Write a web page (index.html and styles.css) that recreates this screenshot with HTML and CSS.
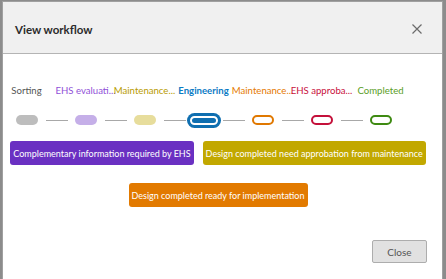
FILE: index.html
```html
<!DOCTYPE html>
<html>
<head>
<meta charset="utf-8">
<link rel="stylesheet" href="styles.css">
</head>
<body>
<div class="dialog">
  <div class="header">
    <span class="title">View workflow</span>
    <span class="close-x">
      <svg width="10" height="10" viewBox="0 0 10 10"><path d="M0.5 0.5L9.5 9.5M9.5 0.5L0.5 9.5" stroke="#6b6b6b" stroke-width="1.2" fill="none"/></svg>
    </span>
  </div>
  <div class="body">
    <div class="steps">
      <div class="step">
        <div class="label c-gray">Sorting</div>
        <div class="track"><span class="pill p-gray"></span></div>
      </div>
      <div class="step">
        <div class="label c-purple">EHS evaluati...</div>
        <div class="track"><span class="pill p-purple"></span></div>
      </div>
      <div class="step">
        <div class="label c-gold">Maintenance...</div>
        <div class="track"><span class="pill p-gold"></span></div>
      </div>
      <div class="step">
        <div class="label c-blue active">Engineering</div>
        <div class="track"><span class="pill p-active"><span class="inner"></span></span></div>
      </div>
      <div class="step">
        <div class="label c-orange">Maintenance...</div>
        <div class="track"><span class="pill o-orange"></span></div>
      </div>
      <div class="step">
        <div class="label c-red">EHS approba...</div>
        <div class="track"><span class="pill o-red"></span></div>
      </div>
      <div class="step last">
        <div class="label c-green">Completed</div>
        <div class="track"><span class="pill o-green"></span></div>
      </div>
    </div>
    <div class="actions">
      <button class="act b-purple">Complementary information required by EHS</button>
      <button class="act b-gold">Design completed need approbation from maintenance</button>
      <button class="act b-orange">Design completed ready for implementation</button>
    </div>
    <div class="footer">
      <button class="close-btn">Close</button>
    </div>
  </div>
</div>
</body>
</html>
```
FILE: styles.css
```css
html, body {
  margin: 0;
  padding: 0;
}
body {
  background: #8c8c8c;
  width: 446px;
  height: 279px;
  overflow: hidden;
  font-family: "Lato", "Open Sans", sans-serif;
}
.dialog {
  margin: 1px 3px 0 2px;
  height: 278px;
  background: #ffffff;
  border-left: 1px solid #a0a0a0;
  border-top: 1px solid #a0a0a0;
  border-right: 1px solid #a0a0a0;
  box-sizing: border-box;
  overflow: hidden;
}
.header {
  height: 51px;
  background: #f0f0f0;
  border-bottom: 1px solid #b4b4b4;
  display: flex;
  align-items: center;
  justify-content: space-between;
  padding: 0 20px 0 12px;
}
.title {
  font-weight: 700;
  font-size: 11.5px;
  color: #2b2b2b;
  padding-top: 3px;
}
.close-x {
  display: flex;
  padding-top: 3px;
}
.body {
  padding-top: 31px;
}
.steps {
  display: flex;
  margin-left: -6px;
}
.step {
  width: 59px;
  flex: none;
  display: flex;
  flex-direction: column;
  align-items: center;
  position: relative;
}
.label {
  font-size: 9.6px;
  line-height: 12px;
  white-space: nowrap;
  text-align: center;
}
.label.active { font-weight: 700; }
.c-gray { color: #555555; }
.c-purple { color: #9050d8; }
.c-gold { color: #b89b00; }
.c-blue { color: #0c7bc4; }
.c-orange { color: #e57a00; }
.c-red { color: #c8103c; }
.c-green { color: #5a9e26; }
.track {
  height: 16px;
  margin-top: 15px;
  display: flex;
  align-items: center;
  justify-content: center;
}
.step::after {
  content: "";
  position: absolute;
  left: calc(50% + 19px);
  width: 22px;
  top: 35px;
  border-top: 1px solid #a8a8a8;
}
.step.last::after { display: none; }
.pill {
  display: block;
  width: 22px;
  height: 10px;
  border-radius: 5px;
  box-sizing: border-box;
}
.p-gray { background: #bdbdbd; }
.p-purple { background: #c5afe8; }
.p-gold { background: #e7dd9c; }
.p-active {
  width: 34px;
  height: 15px;
  border-radius: 8px;
  background: #0f6fb0;
  padding: 3px;
  display: flex;
}
.p-active .inner {
  flex: 1;
  border: 2px solid #ffffff;
  border-radius: 5px;
  background: #0f6fb0;
}
.o-orange { border: 2.5px solid #e07800; background: #fff; }
.o-red { border: 2.5px solid #c4103a; background: #fff; }
.o-green { border: 2.5px solid #3e8a12; background: #fff; }
.actions {
  margin: 13px 0 0 6px;
  width: 418px;
  display: flex;
  flex-wrap: wrap;
  justify-content: center;
  column-gap: 9px;
  row-gap: 18px;
}
.act {
  font-family: inherit;
  font-size: 9px;
  color: #ffffff;
  border: none;
  border-radius: 3px;
  height: 24px;
  padding: 0 3px;
}
.b-purple { background: #6a30c2; }
.b-gold { background: #c2a800; }
.b-orange { background: #e27a00; }
.footer {
  display: flex;
  justify-content: flex-end;
  padding: 33px 15px 0 0;
}
.close-btn {
  width: 55px;
  height: 23px;
  background: #e1e1e1;
  border: 1px solid #adadad;
  border-radius: 2px;
  font-family: inherit;
  font-size: 10px;
  color: #555;
}
```
